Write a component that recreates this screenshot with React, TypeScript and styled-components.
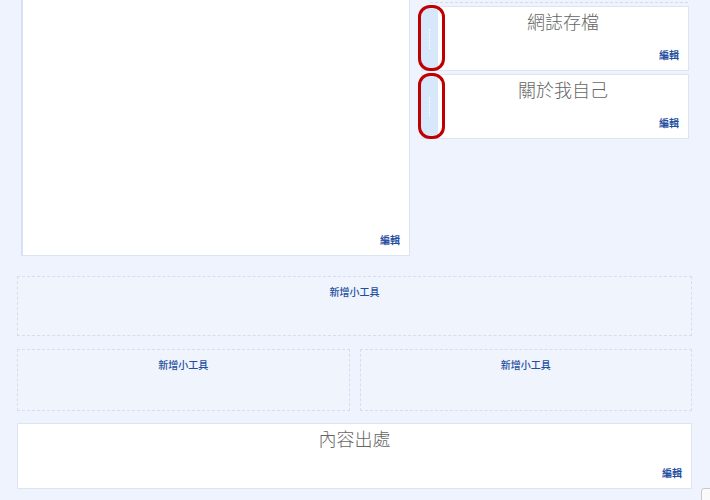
import React from 'react';
import styled, { createGlobalStyle } from 'styled-components';

const Global = createGlobalStyle`
  html, body {
    margin: 0;
    padding: 0;
    background: #eef3fd;
    overflow: hidden;
  }
  body {
    font-family: "Noto Sans CJK TC", "Liberation Sans", sans-serif;
  }
`;

const Page = styled.div`
  position: relative;
  width: 710px;
  height: 500px;
  padding: 0 18px 0 17px;
  box-sizing: border-box;
`;

const TopRow = styled.div`
  display: flex;
  gap: 8px;
  padding-left: 4px;
`;

const MainPanel = styled.div`
  position: relative;
  width: 389px;
  height: 256px;
  background: #fff;
  border: 1px solid #dbe4f1;
  border-top: none;
  box-sizing: border-box;
  border-left: 2px solid #d6e2f2;
`;

const Side = styled.div`
  width: 271px;
  display: flex;
  flex-direction: column;
  gap: 3px;
`;

const TopDash = styled.div`
  height: 2px;
  margin: 0 1px 0 12px;
  border-bottom: 1px dashed #cfdcee;
`;

const WidgetRow = styled.div`
  position: relative;
  display: flex;
  height: 65px;
`;

const Handle = styled.div`
  width: 16px;
  margin-left: 3px;
  background: #d6e8fa;
  display: flex;
  justify-content: center;
  align-items: center;
`;

const Dots = styled.div`
  width: 0;
  height: 20px;
  border-left: 1px dotted #ffffff;
`;

const Card = styled.div`
  position: relative;
  flex: 1;
  background: #fff;
  border: 1px solid #dce5f1;
  box-sizing: border-box;
  text-align: center;
`;

const Title = styled.div`
  padding-top: 2px;
  font-size: 18px;
  line-height: 24px;
  color: #666;
  font-weight: 300;
`;

const Edit = styled.a`
  position: absolute;
  right: 9px;
  bottom: 9px;
  font-size: 10px;
  line-height: 12px;
  font-weight: bold;
  color: #1f4fa0;
  text-decoration: none;
`;

const Mark = styled.div`
  position: absolute;
  left: 0;
  top: -1px;
  width: 27px;
  height: 66px;
  border: 3px solid #c00000;
  border-radius: 12px;
  box-sizing: border-box;
  pointer-events: none;
`;

const Slot = styled.div<{ $h: number }>`
  flex: 1;
  height: ${(p) => p.$h}px;
  border: 1px dashed #d3deee;
  box-sizing: border-box;
  text-align: center;
  padding-top: 9px;
  font-size: 10px;
  line-height: 12px;
  background: #eff4fd;
`;

const AddLink = styled.a`
  color: #1f4fa0;
  text-decoration: none;
  font-weight: 500;
`;

const Row = styled.div<{ $top: number }>`
  display: flex;
  gap: 10px;
  margin-top: ${(p) => p.$top}px;
`;

const Footer = styled.div`
  margin-top: 12px;
  height: 66px;
  background: #fff;
  border: 1px solid #dce5f1;
  box-sizing: border-box;
  position: relative;
  text-align: center;
`;

const Corner = styled.div`
  position: absolute;
  left: 701px;
  top: 488px;
  width: 30px;
  height: 30px;
  background: #fafafa;
  border: 1px solid #c8c8c8;
  border-radius: 3px;
`;

const sideWidgets = ['網誌存檔', '關於我自己'];

export default function App() {
  return (
    <Page>
      <Global />
      <TopRow>
        <MainPanel>
          <Edit href="#">編輯</Edit>
        </MainPanel>
        <Side>
          <TopDash />
          {sideWidgets.map((t) => (
            <WidgetRow key={t}>
              <Handle>
                <Dots />
              </Handle>
              <Card>
                <Title>{t}</Title>
                <Edit href="#">編輯</Edit>
              </Card>
              <Mark />
            </WidgetRow>
          ))}
        </Side>
      </TopRow>
      <Row $top={20}>
        <Slot $h={60}>
          <AddLink href="#">新增小工具</AddLink>
        </Slot>
      </Row>
      <Row $top={13}>
        <Slot $h={62}>
          <AddLink href="#">新增小工具</AddLink>
        </Slot>
        <Slot $h={62}>
          <AddLink href="#">新增小工具</AddLink>
        </Slot>
      </Row>
      <Footer>
        <Title>內容出處</Title>
        <Edit href="#">編輯</Edit>
      </Footer>
      <Corner />
    </Page>
  );
}
